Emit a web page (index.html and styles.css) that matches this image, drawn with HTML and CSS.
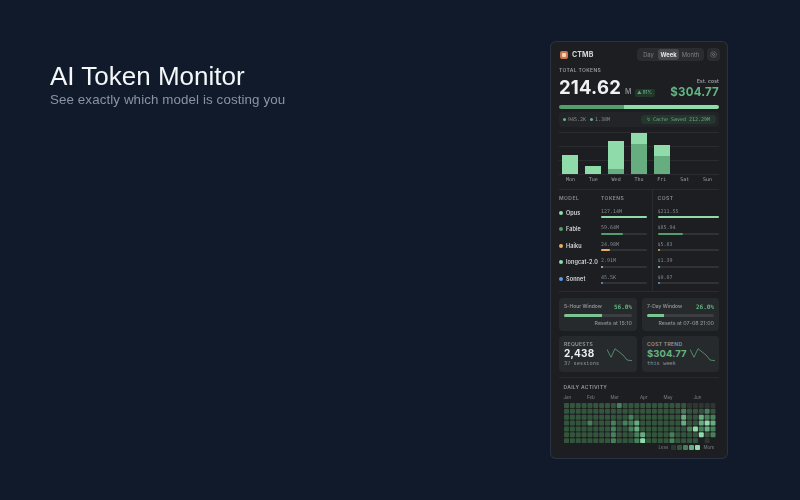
FILE: index.html
```html
<!DOCTYPE html>
<html lang="en">
<head>
<meta charset="utf-8">
<title>AI Token Monitor</title>
<link rel="stylesheet" href="styles.css">
</head>
<body>
<main class="page">
  <section class="hero">
    <h1>AI Token Monitor</h1>
    <p>See exactly which model is costing you</p>
  </section>
  <section class="panel">
    <header class="top">
      <span class="logo"><span class="logo-core"></span></span>
      <span class="brand">CTMB</span>
      <div class="seg">
        <span>Day</span><span class="on">Week</span><span>Month</span>
      </div>
      <span class="gear">
        <svg viewBox="0 0 10 10" width="7" height="7"><circle cx="5" cy="5" r="1.5" fill="none" stroke="#8a8d90" stroke-width=".9"/><circle cx="5" cy="5" r="3.9" fill="none" stroke="#8a8d90" stroke-width="1.1" stroke-dasharray="1.3 .75"/></svg>
      </span>
    </header>
    <div class="lbl total">TOTAL TOKENS</div>
    <div class="sum">
      <div class="big"><b>214.62</b><span class="unit">M</span><span class="delta">▲ 81%</span></div>
      <div class="est"><small>Est. cost</small><strong>$304.77</strong></div>
    </div>
    <div class="split"><i></i><i></i></div>
    <div class="stats">
      <span class="stat"><i class="dot"></i>945.2K</span>
      <span class="stat"><i class="dot"></i>1.38M</span>
      <span class="cache">↯ Cache Saved 212.29M</span>
    </div>
    <div class="chart">
      <div class="col"><div class="bar b1"></div><span>Mon</span></div>
      <div class="col"><div class="bar b2"></div><span>Tue</span></div>
      <div class="col"><div class="bar b3"><i class="d3"></i></div><span>Wed</span></div>
      <div class="col"><div class="bar b4"><i class="d4"></i></div><span>Thu</span></div>
      <div class="col"><div class="bar b5"><i class="d5"></i></div><span>Fri</span></div>
      <div class="col"><div class="bar"></div><span>Sat</span></div>
      <div class="col"><div class="bar"></div><span>Sun</span></div>
    </div>
    <div class="table">
      <div class="row head"><span>MODEL</span><span>TOKENS</span><span>COST</span></div>
      <div class="row"><span class="name"><i class="mdot mint"></i>Opus</span><div class="m"><span>127.14M</span><div class="track"><i class="mint w100"></i></div></div><div class="m"><span>$211.55</span><div class="track"><i class="mint w100"></i></div></div></div>
      <div class="row"><span class="name"><i class="mdot green"></i>Fable</span><div class="m"><span>59.64M</span><div class="track"><i class="green w47"></i></div></div><div class="m"><span>$85.94</span><div class="track"><i class="green w41"></i></div></div></div>
      <div class="row"><span class="name"><i class="mdot amber"></i>Haiku</span><div class="m"><span>24.98M</span><div class="track"><i class="amber w20"></i></div></div><div class="m"><span>$5.83</span><div class="track"><i class="amber w3"></i></div></div></div>
      <div class="row"><span class="name"><i class="mdot mint"></i>longcat-2.0</span><div class="m"><span>2.91M</span><div class="track"><i class="mint w3"></i></div></div><div class="m"><span>$1.39</span><div class="track"><i class="mint w3"></i></div></div></div>
      <div class="row"><span class="name"><i class="mdot blue"></i>Sonnet</span><div class="m"><span>45.5K</span><div class="track"><i class="blue w3"></i></div></div><div class="m"><span>$0.07</span><div class="track"><i class="blue w3"></i></div></div></div>
    </div>
    <div class="cards">
      <div class="card win">
        <div class="wt"><span>5-Hour Window</span><b>56.0%</b></div>
        <div class="wbar"><i class="w56"></i></div>
        <div class="wr">Resets at 15:10</div>
      </div>
      <div class="card win">
        <div class="wt"><span>7-Day Window</span><b>26.0%</b></div>
        <div class="wbar"><i class="w26"></i></div>
        <div class="wr">Resets at 07-08 21:00</div>
      </div>
      <div class="card kpi">
        <div class="lbl2">REQUESTS</div>
        <div class="kv">2,438</div>
        <div class="ks">37 sessions</div>
        <svg class="spark" viewBox="0 0 25 14"><polyline points="0,1.3 4,9.3 8,.7 16,7 20,12 25,12.7"/></svg>
      </div>
      <div class="card kpi">
        <div class="lbl2">COST TREND</div>
        <div class="kv g">$304.77</div>
        <div class="ks">this week</div>
        <svg class="spark" viewBox="0 0 25 14"><polyline points="0,1.3 4,9.3 8,.7 16,7 20,12 25,12.7"/></svg>
      </div>
    </div>
    <div class="daily">
      <div class="lbl2 dt">DAILY ACTIVITY</div>
      <div class="months"><span class="m0">Jan</span><span class="m1">Feb</span><span class="m2">Mar</span><span class="m3">Apr</span><span class="m4">May</span><span class="m5">Jun</span></div>
      <svg class="heat" id="heat" viewBox="0 0 152 40.6"></svg>
      <div class="legend"><span>Less</span><i class="l0"></i><i class="l1"></i><i class="l2"></i><i class="l3"></i><i class="l4"></i><span>More</span></div>
    </div>
  </section>
</main>
<script src="script.js"></script>
</body>
</html>
```

FILE: styles.css
```css
* { box-sizing: border-box; }
html, body { margin: 0; height: 100%; }
body { background: #101a2b; overflow: hidden; font-family: "Inter", sans-serif; }
.page { display: flex; justify-content: space-between; width: 800px; height: 500px; padding: 42px 73px 0 50px; filter: blur(.3px); }
.hero { padding-top: 19px; }
.hero h1 { margin: 0; font: 400 26px/31px "Liberation Sans", sans-serif; color: #f4f6f8; }
.hero p { margin: 0; font: 400 13.35px/16px "Liberation Sans", sans-serif; letter-spacing: .1px; color: #8b93a3; }

.panel { width: 176px; height: 416px; padding: 0 8px; background: #1c1e21; border-radius: 5px; box-shadow: 0 0 0 1px #2a3242; color: #e8e9ea; overflow: hidden; }
.top { display: flex; align-items: center; height: 25px; padding-left: 1px; margin-right: -1px; }
.logo { width: 8px; height: 8px; border-radius: 2px; background: #c9764a; display: flex; align-items: center; justify-content: center; }
.logo-core { width: 4px; height: 4px; border-radius: 1px; background: #f3d3b5; }
.brand { margin-left: 4px; font-size: 7px; font-weight: 700; color: #d8dadc; letter-spacing: .1px; }
.seg { margin-left: auto; display: flex; align-items: center; width: 67px; height: 13px; padding: 1px 2px; background: #2a2c2f; border-radius: 4px; font-size: 5.8px; color: #7d8084; }
.seg span { flex: 1; text-align: center; line-height: 11px; }
.seg span:first-child { flex: 0 0 19px; }
.seg span.on { flex: 0 0 21px; background: #46484b; border-radius: 3px; color: #e4e5e6; font-weight: 700; }
.gear { margin-left: 3px; width: 13px; height: 13px; background: #2a2c2f; border-radius: 4px; display: flex; align-items: center; justify-content: center; }

.lbl { font-size: 5px; font-weight: 600; letter-spacing: .35px; color: #9a9c9f; line-height: 6px; }
.sum { display: flex; justify-content: space-between; align-items: flex-end; height: 25.5px; }
.big { display: flex; align-items: baseline; padding-bottom: 2px; }
.big b { font-size: 18.5px; font-weight: 700; letter-spacing: .2px; line-height: 20px; color: #f0f1f2; }
.unit { margin-left: 4px; font-size: 7px; font-weight: 600; color: #85888c; }
.delta { margin-left: 3px; width: 20px; height: 8px; border-radius: 2px; background: #21382b; color: #58a678; font-size: 4.5px; line-height: 8px; text-align: center; font-weight: 600; }
.est { display: flex; flex-direction: column; align-items: flex-end; }
.est small { font-size: 5px; font-weight: 600; color: #a3a5a8; line-height: 7px; margin-bottom: 1px; letter-spacing: .15px; }
.est strong { font-size: 11.5px; font-weight: 700; letter-spacing: .2px; line-height: 13px; color: #62b482; }

.split { display: flex; height: 4px; margin-top: 6px; border-radius: 2px; overflow: hidden; }
.split i:first-child { width: 65px; background: #549d6d; }
.split i:last-child { flex: 1; background: #8fdcaa; }
.stats { display: flex; align-items: center; height: 15px; margin-top: 3px; padding: 0 3px 0 4px; background: #222427; border-radius: 3px; font: 5px "DejaVu Sans Mono", monospace; color: #8a8d90; }
.stat { display: flex; align-items: center; margin-right: 4px; }
.dot { width: 3px; height: 3px; border-radius: 50%; background: #62b482; margin-right: 2px; }
.cache { margin-left: auto; width: 75px; height: 9px; line-height: 9px; text-align: center; background: #22382c; border-radius: 4px; color: #7f9f8b; }

.chart { display: grid; grid-template-columns: repeat(7, 1fr); height: 55px; margin-top: 4.5px; background-image: linear-gradient(#2a2c2f 1px, transparent 1px); background-size: 100% 14px; background-position: 0 1px; background-repeat: repeat-y; padding-top: 1px; }
.col { display: flex; flex-direction: column; align-items: center; }
.bar { position: relative; width: 16px; height: 42px; margin-bottom: 2px; display: flex; flex-direction: column; justify-content: flex-end; }
.b1, .b2, .b3, .b4, .b5 { background: linear-gradient(#8fdcaa, #8fdcaa) bottom / 100% 100% no-repeat; }
.b1 { background-size: 100% 19px; }
.b2 { background-size: 100% 8.5px; }
.b3 { background-size: 100% 33.5px; }
.b4 { background-size: 100% 41.5px; }
.b5 { background-size: 100% 29.5px; }
.bar i { display: block; background: #66ad7f; }
.d3 { height: 5.5px; }
.d4 { height: 30px; }
.d5 { height: 18px; }
.col span { font: 5px/6px "DejaVu Sans Mono", monospace; color: #a0a2a5; }

.table { margin-top: 2.5px; padding-top: 3px; border-top: 1px solid #292b2e; border-bottom: 1px solid #292b2e; background: linear-gradient(#2a2c2f, #2a2c2f) 93px 0 / 1px 100% no-repeat; height: 103px; }
.row { display: grid; grid-template-columns: 42px 56.5px 61.5px; align-items: center; height: 16.5px; }
.row > :nth-child(2) { padding-right: 10.5px; }
.row.head { height: 10px; font-size: 5px; font-weight: 600; letter-spacing: .45px; color: #8b8e91; margin-bottom: 2px; }
.name { display: flex; align-items: center; font-size: 5.5px; font-weight: 600; letter-spacing: .1px; color: #d6d8da; white-space: nowrap; }
.mdot { flex: none; width: 4px; height: 4px; border-radius: 50%; margin: 0 3px 0 0; }
.m { display: flex; flex-direction: column; font: 5px/6px "DejaVu Sans Mono", monospace; color: #85888c; }
.track { height: 2px; margin-top: 2.5px; background: #303234; border-radius: 1px; }
.track i { display: block; height: 2px; border-radius: 1px; }
.mint { background: #8fdcaa; }
.green { background: #549d6d; }
.amber { background: #e8ad5f; }
.blue { background: #5a9be8; }
.w100 { width: 100%; }
.w47 { width: 47%; }
.w41 { width: 41%; }
.w20 { width: 20%; }
.w3 { width: 2px; }

.cards { display: grid; grid-template-columns: 78px 77px; grid-template-rows: 33px 36px; gap: 5px; margin-top: 6px; }
.card { position: relative; background: #272a2c; border-radius: 4px; padding: 5px 5px; }
.wt { display: flex; justify-content: space-between; align-items: center; height: 7px; font-size: 5px; font-weight: 500; color: #9a9c9f; }
.wt b { font: 700 6px "DejaVu Sans Mono", monospace; color: #62b482; }
.wbar { height: 3px; margin-top: 4px; border-radius: 1.5px; background: #3c3e41; overflow: hidden; }
.wbar i { display: block; height: 100%; background: #7cc494; }
.w56 { width: 56%; }
.w26 { width: 26%; }
.wr { margin-top: 3px; text-align: right; font-size: 5.3px; font-weight: 500; line-height: 7px; color: #909295; }
.kpi { padding-top: 5px; }
.lbl2 { font-size: 5px; font-weight: 600; letter-spacing: .3px; line-height: 6px; color: #96989b; }
.kv { margin-top: 1px; font-size: 10px; font-weight: 700; line-height: 11px; letter-spacing: .2px; color: #eeeff0; }
.kv.g { color: #62b482; font-size: 9.5px; letter-spacing: .1px; }
.ks { font: 5.3px/7px "DejaVu Sans Mono", monospace; color: #909295; margin-top: 1px; }
.spark { position: absolute; left: 48px; top: 12px; width: 25px; height: 14px; }
.spark polyline { fill: none; stroke: #5f9f78; stroke-width: .8; }

.daily { margin-top: 5px; padding: 6px 4.5px 0; border-top: 1px solid #272a2c; }
.months { position: relative; height: 7px; margin-top: 4px; font-size: 4.5px; line-height: 7px; color: #7d8084; }
.months span { position: absolute; top: 0; }
.m0 { left: 0; } .m1 { left: 23.5px; } .m2 { left: 47px; } .m3 { left: 76.5px; } .m4 { left: 100px; } .m5 { left: 130px; }
.heat { display: block; width: 152px; height: 40.6px; margin-top: 2px; }
.legend i { display: block; width: 5px; height: 5px; border-radius: 1px; }
.l0 { background: #2d3631; fill: #2d3631; }
.l1 { background: #33553c; fill: #33553c; }
.l2 { background: #47805a; fill: #47805a; }
.l3 { background: #66ad7f; fill: #66ad7f; }
.l4 { background: #8fdcaa; fill: #8fdcaa; }
.legend { display: flex; justify-content: flex-end; align-items: center; gap: 1px; height: 7px; margin-top: 1px; font-size: 4.5px; color: #7d8084; }
.legend span:first-child { margin-right: 2px; }
.legend span:last-child { margin-left: 2px; }
```

FILE: script.js
```js
var rows = [
  "11111111121111111111100000",
  "11111111111111111111211121",
  "11111111111211111111311322",
  "11112111212231111111311343",
  "11111111211231111111124232",
  "11111111211123111121111412",
  "11111111211124111121111-0-"
];
var NS = "http://www.w3.org/2000/svg";
var heat = document.getElementById("heat");
rows.forEach(function (row, y) {
  row.split("").forEach(function (c, x) {
    if (c === "-") return;
    var cell = document.createElementNS(NS, "rect");
    cell.setAttribute("x", x * 5.86);
    cell.setAttribute("y", y * 5.86);
    cell.setAttribute("width", 5);
    cell.setAttribute("height", 5);
    cell.setAttribute("rx", 1);
    cell.setAttribute("class", "l" + c);
    heat.appendChild(cell);
  });
});
```
